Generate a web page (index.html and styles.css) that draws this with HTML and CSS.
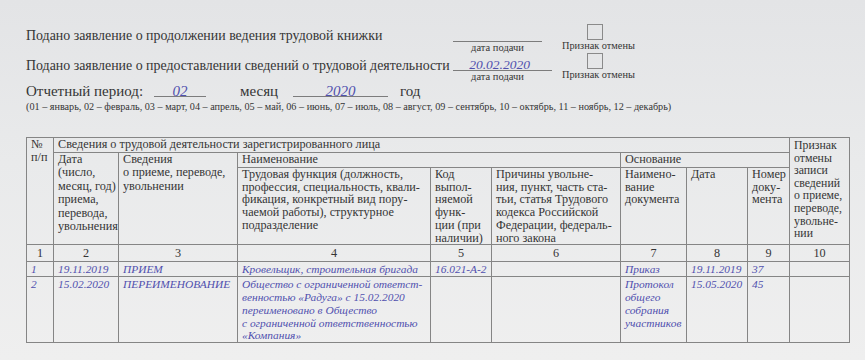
FILE: index.html
```html
<!DOCTYPE html>
<html lang="ru">
<head>
<meta charset="utf-8">
<link rel="stylesheet" href="styles.css">
</head>
<body>
<div class="page">
  <div class="req-row">
    <div class="req-label">Подано заявление о продолжении ведения трудовой книжки</div>
    <div class="date-field short">
      <div class="date-value v1"></div>
      <div class="date-cap">дата подачи</div>
    </div>
    <div class="cancel c1">
      <div class="box b1"></div>
      <div class="cancel-cap">Признак отмены</div>
    </div>
  </div>
  <div class="req-row">
    <div class="req-label">Подано заявление о предоставлении сведений о трудовой деятельности</div>
    <div class="date-field long">
      <div class="date-value v2"><span class="fill">20.02.2020</span></div>
      <div class="date-cap">дата подачи</div>
    </div>
    <div class="cancel c2">
      <div class="box"></div>
      <div class="cancel-cap">Признак отмены</div>
    </div>
  </div>
  <div class="period">
    <span class="period-label">Отчетный период:</span>
    <span class="blank blank-month"><span class="fill">02</span></span>
    <span class="period-word w-month">месяц</span>
    <span class="blank blank-year"><span class="fill">2020</span></span>
    <span class="period-word w-year">год</span>
  </div>
  <div class="note">(01 – январь, 02 – февраль, 03 – март, 04 – апрель, 05 – май, 06 – июнь, 07 – июль, 08 – август, 09 – сентябрь, 10 – октябрь, 11 – ноябрь, 12 – декабрь)</div>

  <table class="work">
    <colgroup>
      <col class="c-n"><col class="c-date"><col class="c-info"><col class="c-func"><col class="c-code"><col class="c-reason"><col class="c-doc"><col class="c-ddate"><col class="c-num"><col class="c-cancel">
    </colgroup>
    <tr class="h1">
      <th rowspan="3">№<br>п/п</th>
      <th colspan="8">Сведения о трудовой деятельности зарегистрированного лица</th>
      <th rowspan="3" class="cancel-head">Признак<br>отмены<br>записи<br>сведений<br>о приеме,<br>переводе,<br>увольне-<br>нии</th>
    </tr>
    <tr class="h2">
      <th rowspan="2" class="tall">Дата<br>(число,<br>месяц, год)<br>приема,<br>перевода,<br>увольнения</th>
      <th rowspan="2" class="tall">Сведения<br>о приеме, переводе,<br>увольнении</th>
      <th colspan="3">Наименование</th>
      <th colspan="3">Основание</th>
    </tr>
    <tr class="h3">
      <th>Трудовая функция (должность,<br>профессия, специальность, квали-<br>фикация, конкретный вид пору-<br>чаемой работы), структурное<br>подразделение</th>
      <th>Код<br>выпол-<br>няемой<br>функ-<br>ции (при<br>наличии)</th>
      <th>Причины увольне-<br>ния, пункт, часть ста-<br>тьи, статья Трудового<br>кодекса Российской<br>Федерации, федераль-<br>ного закона</th>
      <th>Наимено-<br>вание<br>документа</th>
      <th>Дата</th>
      <th>Номер<br>доку-<br>мента</th>
    </tr>
    <tr class="nums">
      <td>1</td><td>2</td><td>3</td><td>4</td><td>5</td><td>6</td><td>7</td><td>8</td><td>9</td><td>10</td>
    </tr>
    <tr class="data d1">
      <td>1</td><td>19.11.2019</td><td>ПРИЕМ</td><td>Кровельщик, строительная бригада</td><td>16.021-А-2</td><td></td><td>Приказ</td><td>19.11.2019</td><td>37</td><td></td>
    </tr>
    <tr class="data d2">
      <td>2</td><td>15.02.2020</td><td>ПЕРЕИМЕНОВАНИЕ</td><td>Общество с ограниченной ответст-<br>венностью «Радуга» с 15.02.2020<br>переименовано в Общество<br>с ограниченной ответственностью<br>«Компания»</td><td></td><td></td><td>Протокол<br>общего<br>собрания<br>участников</td><td>15.05.2020</td><td>45</td><td></td>
    </tr>
  </table>
</div>
</body>
</html>
```

FILE: styles.css
```css
html, body {
  margin: 0;
  padding: 0;
}
body {
  width: 865px;
  height: 360px;
  overflow: hidden;
  background: linear-gradient(180deg, #e3e4e6 0%, #e9eaeb 45%, #efefef 100%);
  font-family: "Liberation Serif", "Times New Roman", serif;
  color: #353535;
}
.page {
  padding: 23px 0 0 26px;
}
.req-row {
  display: flex;
  align-items: flex-start;
  height: 30px;
}
.req-label {
  width: 427px;
  padding-top: 5px;
  font-size: 13.9px;
  line-height: 16px;
  white-space: nowrap;
}
.date-field {
  display: flex;
  flex-direction: column;
}
.date-field.short { width: 89px; }
.date-field.long { width: 99px; }
.date-value {
  border-bottom: 1px solid #7c7c7c;
  text-align: center;
  white-space: nowrap;
}
.date-value.v1 { height: 18px; }
.date-value.v2 {
  height: 17px;
  line-height: 22px;
  padding-right: 6px;
}
.date-cap {
  width: 89px;
  text-align: center;
  font-size: 10.5px;
  line-height: 12px;
  white-space: nowrap;
}
.fill {
  font-style: italic;
  color: #5050ae;
  font-size: 13.5px;
}
.cancel {
  display: flex;
  flex-direction: column;
  align-items: flex-start;
  width: 74px;
}
.cancel.c1 { margin-left: 20px; }
.cancel.c2 { margin-left: 10px; }
.box {
  width: 14px;
  height: 14px;
  margin-left: 25px;
  border: 1px solid #8a8a8a;
}
.box.b1 { margin-top: 1px; }
.cancel-cap {
  font-size: 10.3px;
  line-height: 12px;
  white-space: nowrap;
}
.period {
  display: flex;
  align-items: flex-start;
  height: 18px;
  font-size: 15px;
  line-height: 16px;
}
.period-label { width: 128px; white-space: nowrap; }
.blank {
  height: 13px;
  border-bottom: 1px solid #7c7c7c;
  text-align: center;
}
.blank .fill { font-size: 15px; }
.blank-month { width: 52px; margin-right: 34px; }
.w-month { width: 53px; }
.blank-year { width: 95px; }
.w-year { margin-left: 12px; }
.note {
  font-size: 10.2px;
  line-height: 12px;
  white-space: nowrap;
  margin-bottom: 24px;
}
.work {
  border-collapse: collapse;
  table-layout: fixed;
  width: 823px;
  font-size: 12.2px;
}
.c-n { width: 27px; }
.c-date { width: 65px; }
.c-info { width: 119px; }
.c-func { width: 193px; }
.c-code { width: 61px; }
.c-reason { width: 129px; }
.c-doc { width: 66px; }
.c-ddate { width: 61px; }
.c-num { width: 42px; }
.c-cancel { width: 60px; }
.work th, .work td {
  border: 1px solid #858585;
  padding: 0 2px 0 4px;
  vertical-align: top;
  text-align: left;
  font-weight: normal;
  line-height: 13px;
  white-space: nowrap;
  overflow: hidden;
}
.work .tall { line-height: 13.4px; }
.work .cancel-head {
  font-size: 11.8px;
  line-height: 12.6px;
  padding-top: 1px;
}
.h1 { height: 15px; }
.h2 { height: 15px; }
.h3 { height: 76px; }
.h3 th { line-height: 12.7px; }
.nums { height: 17px; }
.nums td {
  text-align: center;
  vertical-align: middle;
  padding: 0;
}
.data td {
  font-style: italic;
  color: #5050ae;
  font-size: 11.4px;
  padding-top: 1px;
}
.d1 { height: 15px; }
.d2 { height: 66px; }
.d2 td { line-height: 12.8px; }
```
